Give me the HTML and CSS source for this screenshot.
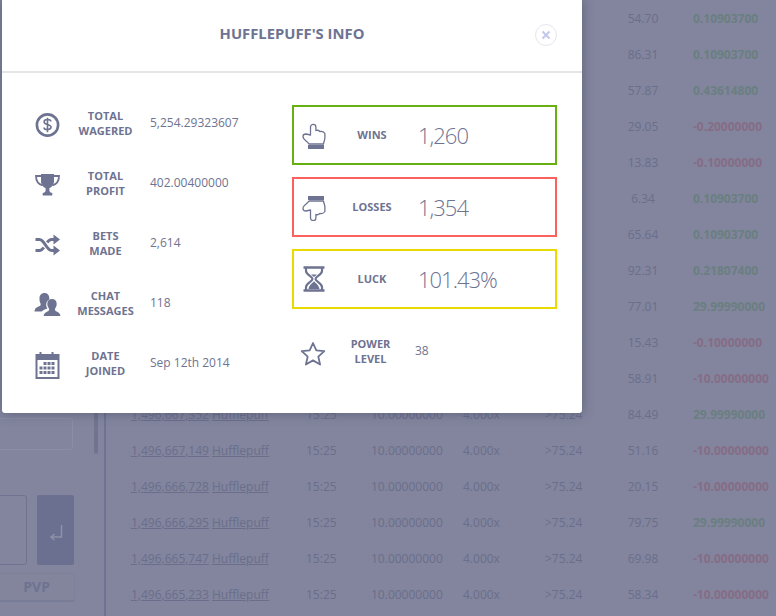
FILE: index.html
```html
<!DOCTYPE html>
<html lang="en">
<head>
<meta charset="utf-8">
<title>Hufflepuff's info</title>
<link rel="stylesheet" href="styles.css">
</head>
<body>
<div class="page">
  <aside class="side">
    <div class="chat"><div class="chat-box"></div><div class="scroll"></div></div>
    <div class="send">
      <div class="send-input"></div>
      <div class="send-btn"><svg width="14" height="18" viewBox="0 0 14 18"><path d="M12.500 1v12H2.500M5.500 10l-3.500 3 3.500 3" fill="none" stroke="#8d90a7" stroke-width="1.500"/></svg></div>
    </div>
    <div class="pvp">PVP</div>
  </aside>
  <main class="bets">
    <div class="bet"><a>1,496,671,920</a><a>Hufflepuff</a><span>15:26</span><span>0.10000000</span><span>2.000x</span><span>&gt;49.50</span><span class="roll">54.70</span><b class="up">0.10903700</b></div>
    <div class="bet"><a>1,496,671,601</a><a>Hufflepuff</a><span>15:26</span><span>0.10000000</span><span>2.000x</span><span>&gt;49.50</span><span class="roll">86.31</span><b class="up">0.10903700</b></div>
    <div class="bet"><a>1,496,671,288</a><a>Hufflepuff</a><span>15:26</span><span>0.40000000</span><span>2.000x</span><span>&gt;49.50</span><span class="roll">57.87</span><b class="up">0.43614800</b></div>
    <div class="bet"><a>1,496,670,954</a><a>Hufflepuff</a><span>15:26</span><span>0.20000000</span><span>2.000x</span><span>&gt;49.50</span><span class="roll">29.05</span><b class="down">-0.20000000</b></div>
    <div class="bet"><a>1,496,670,602</a><a>Hufflepuff</a><span>15:26</span><span>0.10000000</span><span>2.000x</span><span>&gt;49.50</span><span class="roll">13.83</span><b class="down">-0.10000000</b></div>
    <div class="bet"><a>1,496,670,217</a><a>Hufflepuff</a><span>15:26</span><span>0.10000000</span><span>2.000x</span><span>&gt;49.50</span><span class="roll">6.34</span><b class="up">0.10903700</b></div>
    <div class="bet"><a>1,496,669,880</a><a>Hufflepuff</a><span>15:26</span><span>0.10000000</span><span>2.000x</span><span>&gt;49.50</span><span class="roll">65.64</span><b class="up">0.10903700</b></div>
    <div class="bet"><a>1,496,669,431</a><a>Hufflepuff</a><span>15:25</span><span>0.20000000</span><span>2.000x</span><span>&gt;49.50</span><span class="roll">92.31</span><b class="up">0.21807400</b></div>
    <div class="bet"><a>1,496,669,012</a><a>Hufflepuff</a><span>15:25</span><span>10.00000000</span><span>4.000x</span><span>&gt;75.24</span><span class="roll">77.01</span><b class="up">29.99990000</b></div>
    <div class="bet"><a>1,496,668,570</a><a>Hufflepuff</a><span>15:25</span><span>0.10000000</span><span>2.000x</span><span>&gt;49.50</span><span class="roll">15.43</span><b class="down">-0.10000000</b></div>
    <div class="bet"><a>1,496,667,903</a><a>Hufflepuff</a><span>15:25</span><span>10.00000000</span><span>4.000x</span><span>&gt;75.24</span><span class="roll">58.91</span><b class="down">-10.00000000</b></div>
    <div class="bet"><a>1,496,667,352</a><a>Hufflepuff</a><span>15:25</span><span>10.00000000</span><span>4.000x</span><span>&gt;75.24</span><span class="roll">84.49</span><b class="up">29.99990000</b></div>
    <div class="bet"><a>1,496,667,149</a><a>Hufflepuff</a><span>15:25</span><span>10.00000000</span><span>4.000x</span><span>&gt;75.24</span><span class="roll">51.16</span><b class="down">-10.00000000</b></div>
    <div class="bet"><a>1,496,666,728</a><a>Hufflepuff</a><span>15:25</span><span>10.00000000</span><span>4.000x</span><span>&gt;75.24</span><span class="roll">20.15</span><b class="down">-10.00000000</b></div>
    <div class="bet"><a>1,496,666,295</a><a>Hufflepuff</a><span>15:25</span><span>10.00000000</span><span>4.000x</span><span>&gt;75.24</span><span class="roll">79.75</span><b class="up">29.99990000</b></div>
    <div class="bet"><a>1,496,665,747</a><a>Hufflepuff</a><span>15:25</span><span>10.00000000</span><span>4.000x</span><span>&gt;75.24</span><span class="roll">69.98</span><b class="down">-10.00000000</b></div>
    <div class="bet"><a>1,496,665,233</a><a>Hufflepuff</a><span>15:25</span><span>10.00000000</span><span>4.000x</span><span>&gt;75.24</span><span class="roll">58.34</span><b class="down">-10.00000000</b></div>
  </main>
</div>

<section class="modal">
  <header class="modal-head">
    <h1>HUFFLEPUFF'S INFO</h1>
    <button class="close" aria-label="Close"><svg width="10" height="10" viewBox="0 0 10 10"><path d="M1.500 1.500l7 7M8.500 1.500l-7 7" stroke="#c3c8ea" stroke-width="2"/></svg></button>
  </header>
  <div class="modal-body">
    <div class="col-left">
      <div class="stat">
        <svg class="icon" width="26" height="26" viewBox="0 0 26 26"><circle cx="13" cy="13" r="10.600" fill="none" stroke="#6e7391" stroke-width="2.600"/><path d="M16.400 9.400c0-1.200-1.500-1.900-3.400-1.900s-3.400.8-3.400 2.400c0 3.300 6.900 1.800 6.900 5.200 0 1.700-1.600 2.500-3.500 2.500s-3.500-.8-3.500-2.100M13 5.800v14.400" fill="none" stroke="#6e7391" stroke-width="1.600"/></svg>
        <div class="label">TOTAL<br>WAGERED</div><div class="value">5,254.29323607</div>
      </div>
      <div class="stat">
        <svg class="icon" width="26" height="26" viewBox="0 0 26 26"><path d="M6.500 2h13v7c0 4-2.500 6.300-4.600 7v2.400c0 1.500 1.400 2.200 2.900 2.600v2.500H8.200V21c1.500-.4 2.900-1.100 2.900-2.600V16c-2.100-.7-4.600-3-4.600-7z" fill="#6e7391"/><path d="M6.500 4H1.500c0 5 2 8 6.500 9.500M19.500 4h5c0 5-2 8-6.500 9.500" fill="none" stroke="#6e7391" stroke-width="1.800"/></svg>
        <div class="label">TOTAL<br>PROFIT</div><div class="value">402.00400000</div>
      </div>
      <div class="stat">
        <svg class="icon" width="26" height="26" viewBox="0 0 26 26"><path d="M1 7.500h4c5 0 7 11 12 11h3M1 18.500h4c1.800 0 3.100-1.300 4.300-3M20 7.500h-3c-1.800 0-3.100 1.300-4.300 3" fill="none" stroke="#6e7391" stroke-width="3"/><path d="M19 2.500l6.500 5-6.500 5zM19 13.500l6.500 5-6.500 5z" fill="#6e7391"/></svg>
        <div class="label">BETS<br>MADE</div><div class="value">2,614</div>
      </div>
      <div class="stat">
        <svg class="icon" width="26" height="26" viewBox="0 0 26 26"><path d="M10 1c3 0 4.800 2.300 4.800 5 0 .6-.1 1.200-.2 1.700-1.800.8-2.900 2.700-2.900 4.900 0 1.600.5 3 1.300 4-2.300.5-4.300 1.500-5.700 3H0c0-3.200 2.700-4.800 5.700-5.800.6-.9.500-1.800.2-2.600C5 9.900 5 8 5 6c0-2.700 2-5 5-5z" fill="#6e7391"/><path d="M17.500 7c2.800 0 4.700 2 4.700 4.800 0 2-.7 3.700-1.600 4.800-.3.900-.2 1.700.5 2.300 2.300.8 4.400 1.900 4.900 5.100H9c.5-3.200 2.800-4.300 5-5.100.7-.6.800-1.400.5-2.300-.9-1.100-1.700-2.800-1.700-4.800C12.800 9 14.700 7 17.500 7z" fill="#6e7391"/></svg>
        <div class="label">CHAT<br>MESSAGES</div><div class="value">118</div>
      </div>
      <div class="stat">
        <svg class="icon" width="26" height="28" viewBox="0 0 26 28"><path d="M1 3h4V1h2v2h10V1h2v2h6v25H1z" fill="#6e7391"/><rect x="3" y="9" width="20" height="17" fill="#fff"/><path d="M9 11h3v3H9zM13 11h3v3h-3zM17 11h3v3h-3zM5 15.500h3v3H5zM9 15.500h3v3H9zM13 15.500h3v3h-3zM17 15.500h3v3h-3zM5 20h3v3H5zM9 20h3v3H9zM13 20h3v3h-3zM17 20h3v3h-3z" fill="#6e7391"/></svg>
        <div class="label">DATE<br>JOINED</div><div class="value">Sep 12th 2014</div>
      </div>
    </div>
    <div class="col-right">
      <div class="box box-win">
        <svg class="icon-box" width="24" height="28" viewBox="0 0 24 28"><path d="M8.500 14V6a2.700 2.700 0 0 1 5.400 0v3.500c1.500-.5 3 0 4 1 1.800-.5 4 .5 5 2v4c0 2.500-1 4-1.500 6.500H7c-1-2.500-6-4-6-7.500 0-1.500 1-2.500 3-2.500z" fill="none" stroke="#6e7391" stroke-width="1.300" stroke-linejoin="round"/><path d="M6 24h16v4H6z" fill="#6e7391"/></svg>
        <div class="box-label">WINS</div><div class="box-value">1,260</div>
      </div>
      <div class="box box-loss">
        <svg class="icon-box" width="24" height="28" viewBox="0 -3 24 28"><g transform="translate(0 28) scale(1 -1)"><path d="M8.500 14V6a2.700 2.700 0 0 1 5.400 0v3.500c1.500-.5 3 0 4 1 1.800-.5 4 .5 5 2v4c0 2.500-1 4-1.500 6.500H7c-1-2.500-6-4-6-7.500 0-1.500 1-2.500 3-2.500z" fill="none" stroke="#6e7391" stroke-width="1.300" stroke-linejoin="round"/><path d="M6 24h16v4H6z" fill="#6e7391"/></g></svg>
        <div class="box-label">LOSSES</div><div class="box-value">1,354</div>
      </div>
      <div class="box box-luck">
        <svg class="icon-box" width="24" height="26" viewBox="0 0 24 26"><path d="M1.500 1.500h21M1.500 24.500h21" stroke="#6e7391" stroke-width="2.500"/><path d="M4 2v3c0 4 6.500 5.500 6.500 8S4 17 4 21v3M20 2v3c0 4-6.500 5.500-6.500 8s6.500 4 6.500 8v3" fill="none" stroke="#6e7391" stroke-width="2.200"/><path d="M12 15c.8 2 5 3.500 5.500 8h-11c.5-4.500 4.700-6 5.500-8zM9 8.500h6l-3 2.500z" fill="#6e7391"/></svg>
        <div class="box-label">LUCK</div><div class="box-value">101.43%</div>
      </div>
      <div class="power">
        <svg class="icon-star" width="26" height="25" viewBox="0 0 26 25"><path d="M13 2l3.300 7.400 8 .8-6 5.400 1.800 7.900-7.100-4.100-7.100 4.100 1.800-7.900-6-5.400 8-.8z" fill="none" stroke="#6e7391" stroke-width="1.800" stroke-linejoin="round"/></svg>
        <div class="label power-label">POWER<br>LEVEL</div><div class="value">38</div>
      </div>
    </div>
  </div>
</section>
</body>
</html>
```
FILE: styles.css
```css
* { box-sizing: border-box; }
html, body { margin: 0; padding: 0; height: 100%; overflow: hidden; }
body { font-family: "Open Sans", "Liberation Sans", sans-serif; font-size: 12px; background: #82859d; color: #6a6e8b; }

.page { display: flex; width: 776px; height: 616px; }

.side { flex: 0 0 106px; display: flex; flex-direction: column; border-right: 2px solid #6f7391; padding-bottom: 14px; }
.chat { position: relative; flex: 1; }
.chat-box { position: absolute; left: -4px; right: 31px; top: 418px; height: 32px; border: 1px solid #8a8da4; border-radius: 3px; }
.scroll { position: absolute; right: 6px; top: 390px; width: 4px; height: 64px; background: #70748f; border-radius: 0 0 2px 2px; }
.send { display: flex; gap: 10px; height: 70px; margin-left: -4px; }
.send-input { width: 31px; border: 1px solid #6f7391; border-radius: 3px; }
.send-btn { width: 37px; background: #6c7090; border-radius: 2px; display: flex; align-items: center; justify-content: center; padding-top: 6px; }
.pvp { margin: 8px 29px 0 -4px; height: 29px; border-radius: 3px; border: 1px solid #7d8098; border-bottom: 2px solid #787c96; background: #82859c; color: #6f7391; font-size: 14px; font-weight: 700; text-align: right; padding-right: 24px; line-height: 26px; }

.bets { flex: 1; padding-left: 25px; }
.bet { display: grid; grid-template-columns: 81px 94px 65px 92px 82px 68px 60px 1fr; height: 36px; align-items: center; }
.bet a { text-decoration: underline; justify-self: start; }
.bet .roll { text-align: center; }
.bet b { margin-left: 20px; font-weight: 700; }
.bet b.up { color: #6a7f80; }
.bet b.down { color: #866c86; }

.modal { position: absolute; left: 2px; top: 0; width: 580px; height: 413px; background: #fff; border-radius: 0 0 3px 3px; box-shadow: 0 0 12px rgba(60, 64, 92, .55); color: #6e7391; }
.modal-head { position: relative; height: 73px; border-bottom: 2px solid #e6e6e6; display: flex; align-items: center; justify-content: center; padding-bottom: 5px; }
.modal-head h1 { margin: 0; font-size: 14.8px; font-weight: 700; color: #6e7391; }
.close { position: absolute; left: 533px; top: 24px; width: 22px; height: 22px; padding: 0; border: 1px solid #e6e6ee; border-radius: 50%; background: #fff; display: flex; align-items: center; justify-content: center; }

.modal-body { display: flex; }
.col-left { width: 290px; padding: 20px 0 0 32px; }
.stat { display: flex; align-items: center; height: 60px; }
.icon { flex: 0 0 27px; margin-top: 3px; }
.label { font-weight: 700; font-size: 11px; line-height: 15px; text-align: center; flex: 0 0 89px; }
.value { font-size: 12px; color: #6e7391; padding-bottom: 2px; }

.col-right { padding-top: 32px; width: 265px; display: flex; flex-direction: column; gap: 12px; }
.box { display: flex; align-items: center; height: 60px; border: 2px solid; padding-left: 8px; }
.box-win { border-color: #66b014; }
.box-loss { border-color: #fc625d; }
.box-luck { border-color: #e9da00; }
.icon-box { flex: 0 0 24px; }
.box-label { flex: 0 0 92px; text-align: center; font-size: 11px; font-weight: 700; padding-bottom: 2px; }
.box-value { font-size: 22px; font-weight: 300; letter-spacing: -1px; color: #6e7391; }
.power { display: flex; align-items: center; height: 60px; }
.icon-star { flex: 0 0 26px; margin-left: 8px; margin-top: 4px; }
.power-label { flex: 0 0 89px; }
```
